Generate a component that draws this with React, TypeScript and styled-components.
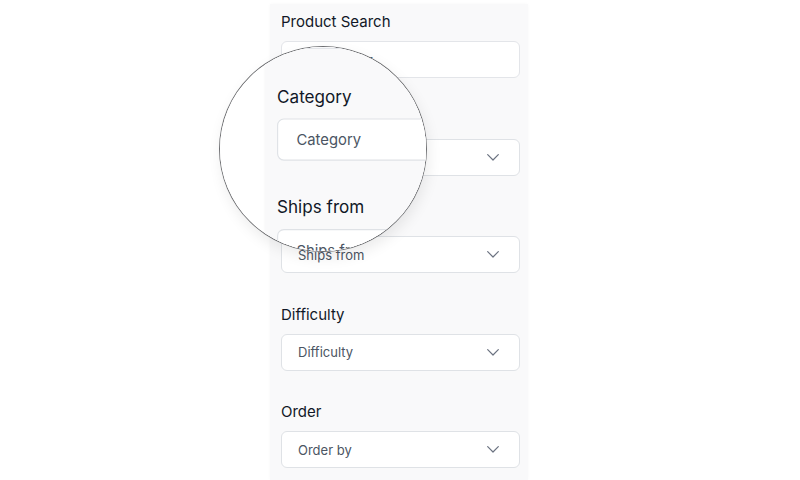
import React from "react";
import styled, {createGlobalStyle} from "styled-components";

const GlobalStyle = createGlobalStyle`
  html, body {
    margin: 0;
    padding: 0;
    background: #ffffff;
  }

  * {
    box-sizing: border-box;
  }
`;

const Page = styled.div`
  position: relative;
  width: 800px;
  height: 480px;
  overflow: hidden;
  background: #ffffff;
  font-family: Inter, "Liberation Sans", sans-serif;
  display: flex;
  justify-content: center;
`;

const Panel = styled.aside`
  width: 258px;
  margin: 4px 0 0 -2px;
  padding: 8px 8px 0 11px;
  background: #f9f9fa;
  box-shadow: 0 0 3px rgba(0, 0, 0, 0.03);
  display: flex;
  flex-direction: column;
`;

const Field = styled.div`
  display: flex;
  flex-direction: column;
  margin-bottom: 31.5px;
`;

const Label = styled.label`
  font-size: 15px;
  line-height: 20px;
  color: #111827;
  margin-bottom: 9px;
`;

const SearchInput = styled.input`
  height: 37px;
  width: 100%;
  border: 1px solid #e3e5e9;
  border-radius: 6px;
  background: #ffffff;
  padding: 0 16px;
  font-family: Inter, "Liberation Sans", sans-serif;
  font-size: 13px;
  color: #374151;
  outline: none;

  &::placeholder {
    color: #4b5563;
  }
`;

const SelectBox = styled.button`
  height: 37px;
  width: 100%;
  border: 1px solid #dfe2e6;
  border-radius: 6px;
  background: #ffffff;
  padding: 0 20px 0 16px;
  display: flex;
  align-items: center;
  justify-content: space-between;
  font-family: Inter, "Liberation Sans", sans-serif;
  font-size: 13px;
  color: #4b5563;
  cursor: pointer;
`;

const Chevron = styled.svg`
  width: 12px;
  height: 7px;
  flex-shrink: 0;
`;

const Lens = styled.div`
  position: absolute;
  left: 219px;
  top: 46px;
  width: 208px;
  height: 206px;
  border-radius: 50%;
  border: 1px solid #6f7073;
  overflow: hidden;
  box-shadow: 2px 6px 14px rgba(0, 0, 0, 0.08);
  z-index: 2;
`;

const LensView = styled.div`
  position: absolute;
  left: -220px;
  top: -47px;
  transform-origin: 0 0;
  transform: translate(-43.3px, -40px) scale(1.14);
`;

const selects = [
    {label: "Category", placeholder: "Category"},
    {label: "Ships from", placeholder: "Ships from"},
    {label: "Difficulty", placeholder: "Difficulty"},
    {label: "Order", placeholder: "Order by"},
];

function ChevronDown() {
    return (
        <Chevron viewBox="0 0 12 7" fill="none">
            <path d="M0.7 0.7 L6 6 L11.3 0.7" stroke="#6b7280" strokeWidth="1.2"
                  strokeLinecap="round" strokeLinejoin="round"/>
        </Chevron>
    );
}

function FilterPanel() {
    return (
        <Panel>
            <Field>
                <Label>Product Search</Label>
                <SearchInput placeholder="Search filter" readOnly/>
            </Field>
            {selects.map((item) => (
                <Field key={item.label}>
                    <Label>{item.label}</Label>
                    <SelectBox type="button">
                        {item.placeholder}
                        <ChevronDown/>
                    </SelectBox>
                </Field>
            ))}
        </Panel>
    );
}

export default function App() {
    return (
        <>
            <GlobalStyle/>
            <Page>
                <FilterPanel/>
                <Lens>
                    <LensView>
                        <Page>
                            <FilterPanel/>
                        </Page>
                    </LensView>
                </Lens>
            </Page>
        </>
    );
}
